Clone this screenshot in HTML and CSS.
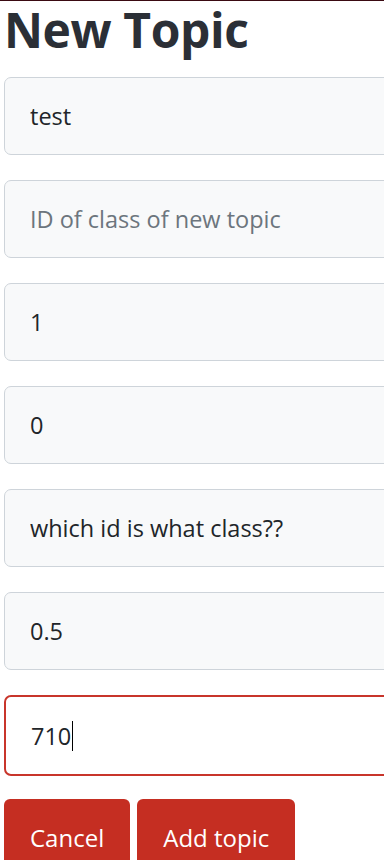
FILE: index.html
```html
<!DOCTYPE html>
<html>
<head>
<meta charset="utf-8">
<link rel="stylesheet" href="styles.css">
</head>
<body>
<div class="topline"></div>
<div class="page">
  <h1 class="title">New Topic</h1>
  <form class="form">
    <input class="field" type="text" value="test">
    <input class="field" type="text" placeholder="ID of class of new topic">
    <input class="field" type="text" value="1">
    <input class="field" type="text" value="0">
    <input class="field" type="text" value="which id is what class??">
    <input class="field" type="text" value="0.5">
    <div class="field focused"><span>710</span><span class="caret"></span></div>
    <div class="actions">
      <button type="button" class="btn">Cancel</button>
      <button type="button" class="btn">Add topic</button>
    </div>
  </form>
</div>
</body>
</html>
```
FILE: styles.css
```css
html, body {
  margin: 0;
  padding: 0;
  background: #fff;
  overflow: hidden;
}
body {
  font-family: "Open Sans", "Noto Sans", sans-serif;
  color: #212529;
}
.topline {
  height: 1px;
  background: #3a0a12;
}
.page {
  padding: 0 0 0 4px;
  width: 380px;
}
.title {
  margin: -4px 0 0;
  font-size: 48px;
  font-weight: 700;
  line-height: 66px;
  color: #2b2f36;
  letter-spacing: -0.4px;
}
.form {
  display: flex;
  flex-direction: column;
  gap: 25px;
  margin-top: 14px;
  overflow: hidden;
}
.field {
  box-sizing: border-box;
  flex: none;
  height: 78px;
  width: 420px;
  border: 1.5px solid #ced4da;
  border-radius: 7px;
  background: #f8f9fa;
  padding: 0 25px;
  font-family: "Open Sans", "Noto Sans", sans-serif;
  font-size: 23.5px;
  color: #212529;
  outline: none;
  display: flex;
  align-items: center;
}
.field::placeholder {
  color: #6c757d;
}
.focused {
  border: 2px solid #c8352b;
  background: #fff;
  height: 81px;
}
.caret {
  display: inline-block;
  width: 1px;
  height: 30px;
  background: #000;
  margin-left: 1px;
}
.actions {
  display: flex;
  gap: 7px;
  margin-top: -2px;
}
.btn {
  border: none;
  background: #c52e22;
  color: #fff;
  font-family: "Open Sans", "Noto Sans", sans-serif;
  font-size: 24px;
  border-radius: 6px;
  height: 80px;
  padding: 25px 26px 0;
  display: flex;
  align-items: flex-start;
  line-height: 1.2;
}
```
